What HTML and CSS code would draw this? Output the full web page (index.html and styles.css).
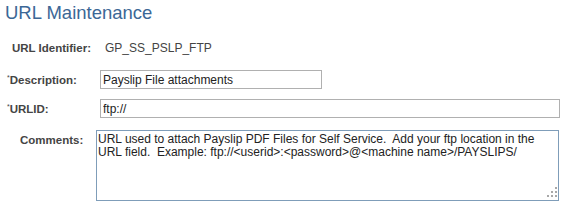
FILE: index.html
```html
<!DOCTYPE html>
<html lang="en">
<head>
  <meta charset="UTF-8">
  <title>URL Maintenance</title>
  <link rel="stylesheet" href="styles.css">
</head>
<body>
  <h1 class="page-title">URL Maintenance</h1>
  <div class="form">
    <div class="row row-id">
      <span class="label label-id">URL Identifier:</span>
      <span class="value">GP_SS_PSLP_FTP</span>
    </div>
    <div class="row row-desc">
      <label class="label label-desc" for="descr"><span class="req">*</span>Description:</label>
      <input type="text" id="descr" class="field field-desc" value="Payslip File attachments">
    </div>
    <div class="row row-url">
      <label class="label label-url" for="urlid"><span class="req">*</span>URLID:</label>
      <input type="text" id="urlid" class="field field-url" value="ftp://">
    </div>
    <div class="row row-comments">
      <label class="label label-comments" for="comments">Comments:</label>
      <div class="comment-box">
        <textarea id="comments" class="comments">URL used to attach Payslip PDF Files for Self Service.  Add your ftp location in the URL field.  Example: ftp://&lt;userid&gt;:&lt;password&gt;@&lt;machine name&gt;/PAYSLIPS/</textarea>
      </div>
    </div>
  </div>
</body>
</html>
```

FILE: styles.css
```css
body {
  margin: 0;
  font-family: "Liberation Sans", Arial, sans-serif;
  background: #fff;
  color: #333;
}
.page-title {
  margin: 0;
  padding: 2px 0 0 5px;
  font-size: 18.5px;
  line-height: 22px;
  font-weight: normal;
  color: #3c6796;
}
.form {
  display: flex;
  flex-direction: column;
  margin-top: 14px;
}
.row {
  display: flex;
  align-items: center;
  height: 19px;
}
.row-desc { margin-top: 13px; }
.row-url { margin-top: 10px; }
.row-comments {
  margin-top: 12px;
  height: auto;
  align-items: flex-start;
}
.label {
  font-size: 11.5px;
  font-weight: bold;
  color: #444;
  flex: none;
}
.req {
  font-size: 7px;
  font-weight: normal;
  vertical-align: top;
  line-height: 7px;
}
.label-id { padding-left: 12px; width: 93px; }
.label-desc { padding-left: 7px; width: 93px; }
.label-url { padding-left: 7px; width: 93px; }
.label-comments { padding-left: 20px; width: 76px; margin-top: 4px; }
.value {
  font-size: 12px;
  color: #444;
}
.field {
  box-sizing: border-box;
  height: 19px;
  margin: 0;
  padding: 0 2px;
  border: 1px solid #b0b0b0;
  font-family: inherit;
  font-size: 12px;
  color: #222;
  background: #fff;
  outline: none;
}
.field-desc { width: 222px; }
.field-url { width: 460px; }
.comment-box {
  position: relative;
  width: 463px;
  height: 71px;
}
.comments {
  box-sizing: border-box;
  display: block;
  width: 463px;
  height: 71px;
  margin: 0;
  padding: 2px 1px;
  border: 1px solid #7f9db9;
  font-family: inherit;
  font-size: 12px;
  line-height: 13px;
  color: #222;
  resize: none;
  overflow: hidden;
  outline: none;
}
.comment-box::after {
  content: "";
  position: absolute;
  right: 2px;
  bottom: 4px;
  width: 2px;
  height: 2px;
  background: #a8a8a8;
  box-shadow: -4px 0 #a8a8a8, -8px 0 #a8a8a8, 0 -4px #a8a8a8, -4px -4px #a8a8a8, 0 -8px #a8a8a8;
}
```
